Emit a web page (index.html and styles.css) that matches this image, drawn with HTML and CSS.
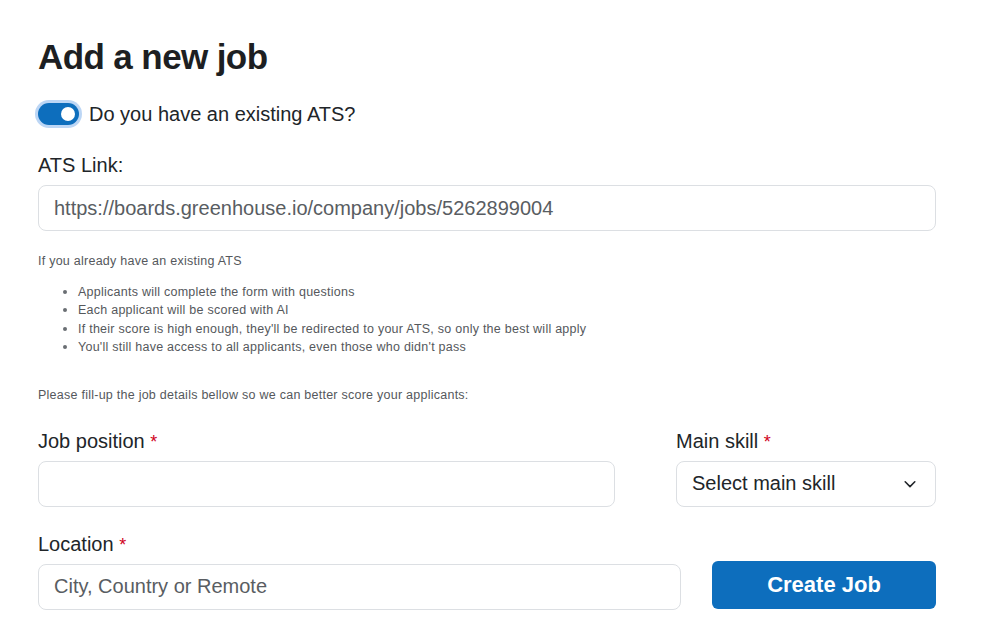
FILE: index.html
```html
<!DOCTYPE html>
<html lang="en">
<head>
<meta charset="utf-8">
<title>Add a new job</title>
<link rel="stylesheet" href="styles.css">
</head>
<body>
<main class="page">
  <h1 class="title">Add a new job</h1>

  <label class="switch-row">
    <span class="switch"><span class="knob"></span></span>
    <span class="switch-label">Do you have an existing ATS?</span>
  </label>

  <div class="field">
    <label class="label">ATS Link:</label>
    <div class="input"><span class="value">https://boards.greenhouse.io/company/jobs/5262899004</span></div>
  </div>

  <p class="help intro">If you already have an existing ATS</p>
  <ul class="help-list">
    <li>Applicants will complete the form with questions</li>
    <li>Each applicant will be scored with AI</li>
    <li>If their score is high enough, they'll be redirected to your ATS, so only the best will apply</li>
    <li>You'll still have access to all applicants, even those who didn't pass</li>
  </ul>

  <p class="help fill">Please fill-up the job details bellow so we can better score your applicants:</p>

  <div class="row row-top">
    <div class="field col-position">
      <label class="label">Job position <span class="req">*</span></label>
      <div class="input"></div>
    </div>
    <div class="field col-skill">
      <label class="label">Main skill <span class="req">*</span></label>
      <div class="input select">
        <span class="select-text">Select main skill</span>
        <svg class="chevron" width="14" height="14" viewBox="0 0 16 16" fill="none" stroke="#212529" stroke-width="1.8" stroke-linecap="round" stroke-linejoin="round"><path d="M2.5 5.5 8 11l5.5-5.5"/></svg>
      </div>
    </div>
  </div>

  <div class="row row-bottom">
    <div class="field col-location">
      <label class="label">Location <span class="req">*</span></label>
      <div class="input"><span class="placeholder">City, Country or Remote</span></div>
    </div>
    <button class="btn">Create Job</button>
  </div>
</main>
</body>
</html>
```

FILE: styles.css
```css
* { box-sizing: border-box; }
html, body { margin: 0; padding: 0; background: #fff; }
body {
  font-family: "Liberation Sans", Arial, sans-serif;
  color: #212529;
}
.page {
  width: 936px;
  padding: 36px 0 0 38px;
}
.title {
  margin: 0;
  font-size: 35px;
  line-height: 42px;
  font-weight: 700;
  letter-spacing: -0.6px;
  color: #1d1f22;
}
.switch-row {
  display: flex;
  align-items: center;
  margin-top: 23px;
  height: 26px;
}
.switch {
  position: relative;
  width: 41px;
  height: 22px;
  border-radius: 11px;
  background: #0d6ebd;
  box-shadow: 0 0 0 3px #bcd6f5;
  flex: none;
}
.knob {
  position: absolute;
  right: 4px;
  top: 4px;
  width: 14px;
  height: 14px;
  border-radius: 50%;
  background: #fff;
}
.switch-label {
  margin-left: 10px;
  font-size: 20px;
  line-height: 26px;
}
.field { display: flex; flex-direction: column; }
.label {
  font-size: 20px;
  line-height: 24px;
  margin-bottom: 8px;
}
.switch-row + .field { margin-top: 26px; }
.req { color: #d0021b; font-size: 18px; line-height: 1; }
.input {
  height: 46px;
  border: 1px solid #dcdfe3;
  border-radius: 8px;
  background: #fff;
  display: flex;
  align-items: center;
  padding: 0 15px;
  font-size: 20px;
}
.value, .placeholder { color: #595d62; }
.help {
  margin: 0;
  font-size: 12.5px;
  line-height: 18px;
  letter-spacing: 0.25px;
  color: #55585c;
}
.intro { margin-top: 21px; }
.help-list {
  margin: 13px 0 0 0;
  padding-left: 40px;
  font-size: 12.5px;
  line-height: 18.4px;
  letter-spacing: 0.25px;
  color: #55585c;
}
.help-list li::marker { font-size: 13px; color: #6a6e73; }
.fill { margin-top: 29px; }
.row { display: flex; }
.row-top { margin-top: 25px; gap: 61px; }
.col-position { width: 577px; }
.col-skill { width: 260px; }
.select { justify-content: space-between; padding-right: 18px; }
.select-text { color: #212529; }
.chevron { display: block; }
.row-bottom { margin-top: 25px; gap: 31px; align-items: flex-end; }
.col-location { width: 643px; }
.btn {
  width: 224px;
  height: 48px;
  margin-bottom: 1px;
  border: none;
  border-radius: 6px;
  background: #0d6ebd;
  color: #fff;
  font-family: "Liberation Sans", Arial, sans-serif;
  font-size: 22px;
  font-weight: 700;
  cursor: pointer;
}
```
